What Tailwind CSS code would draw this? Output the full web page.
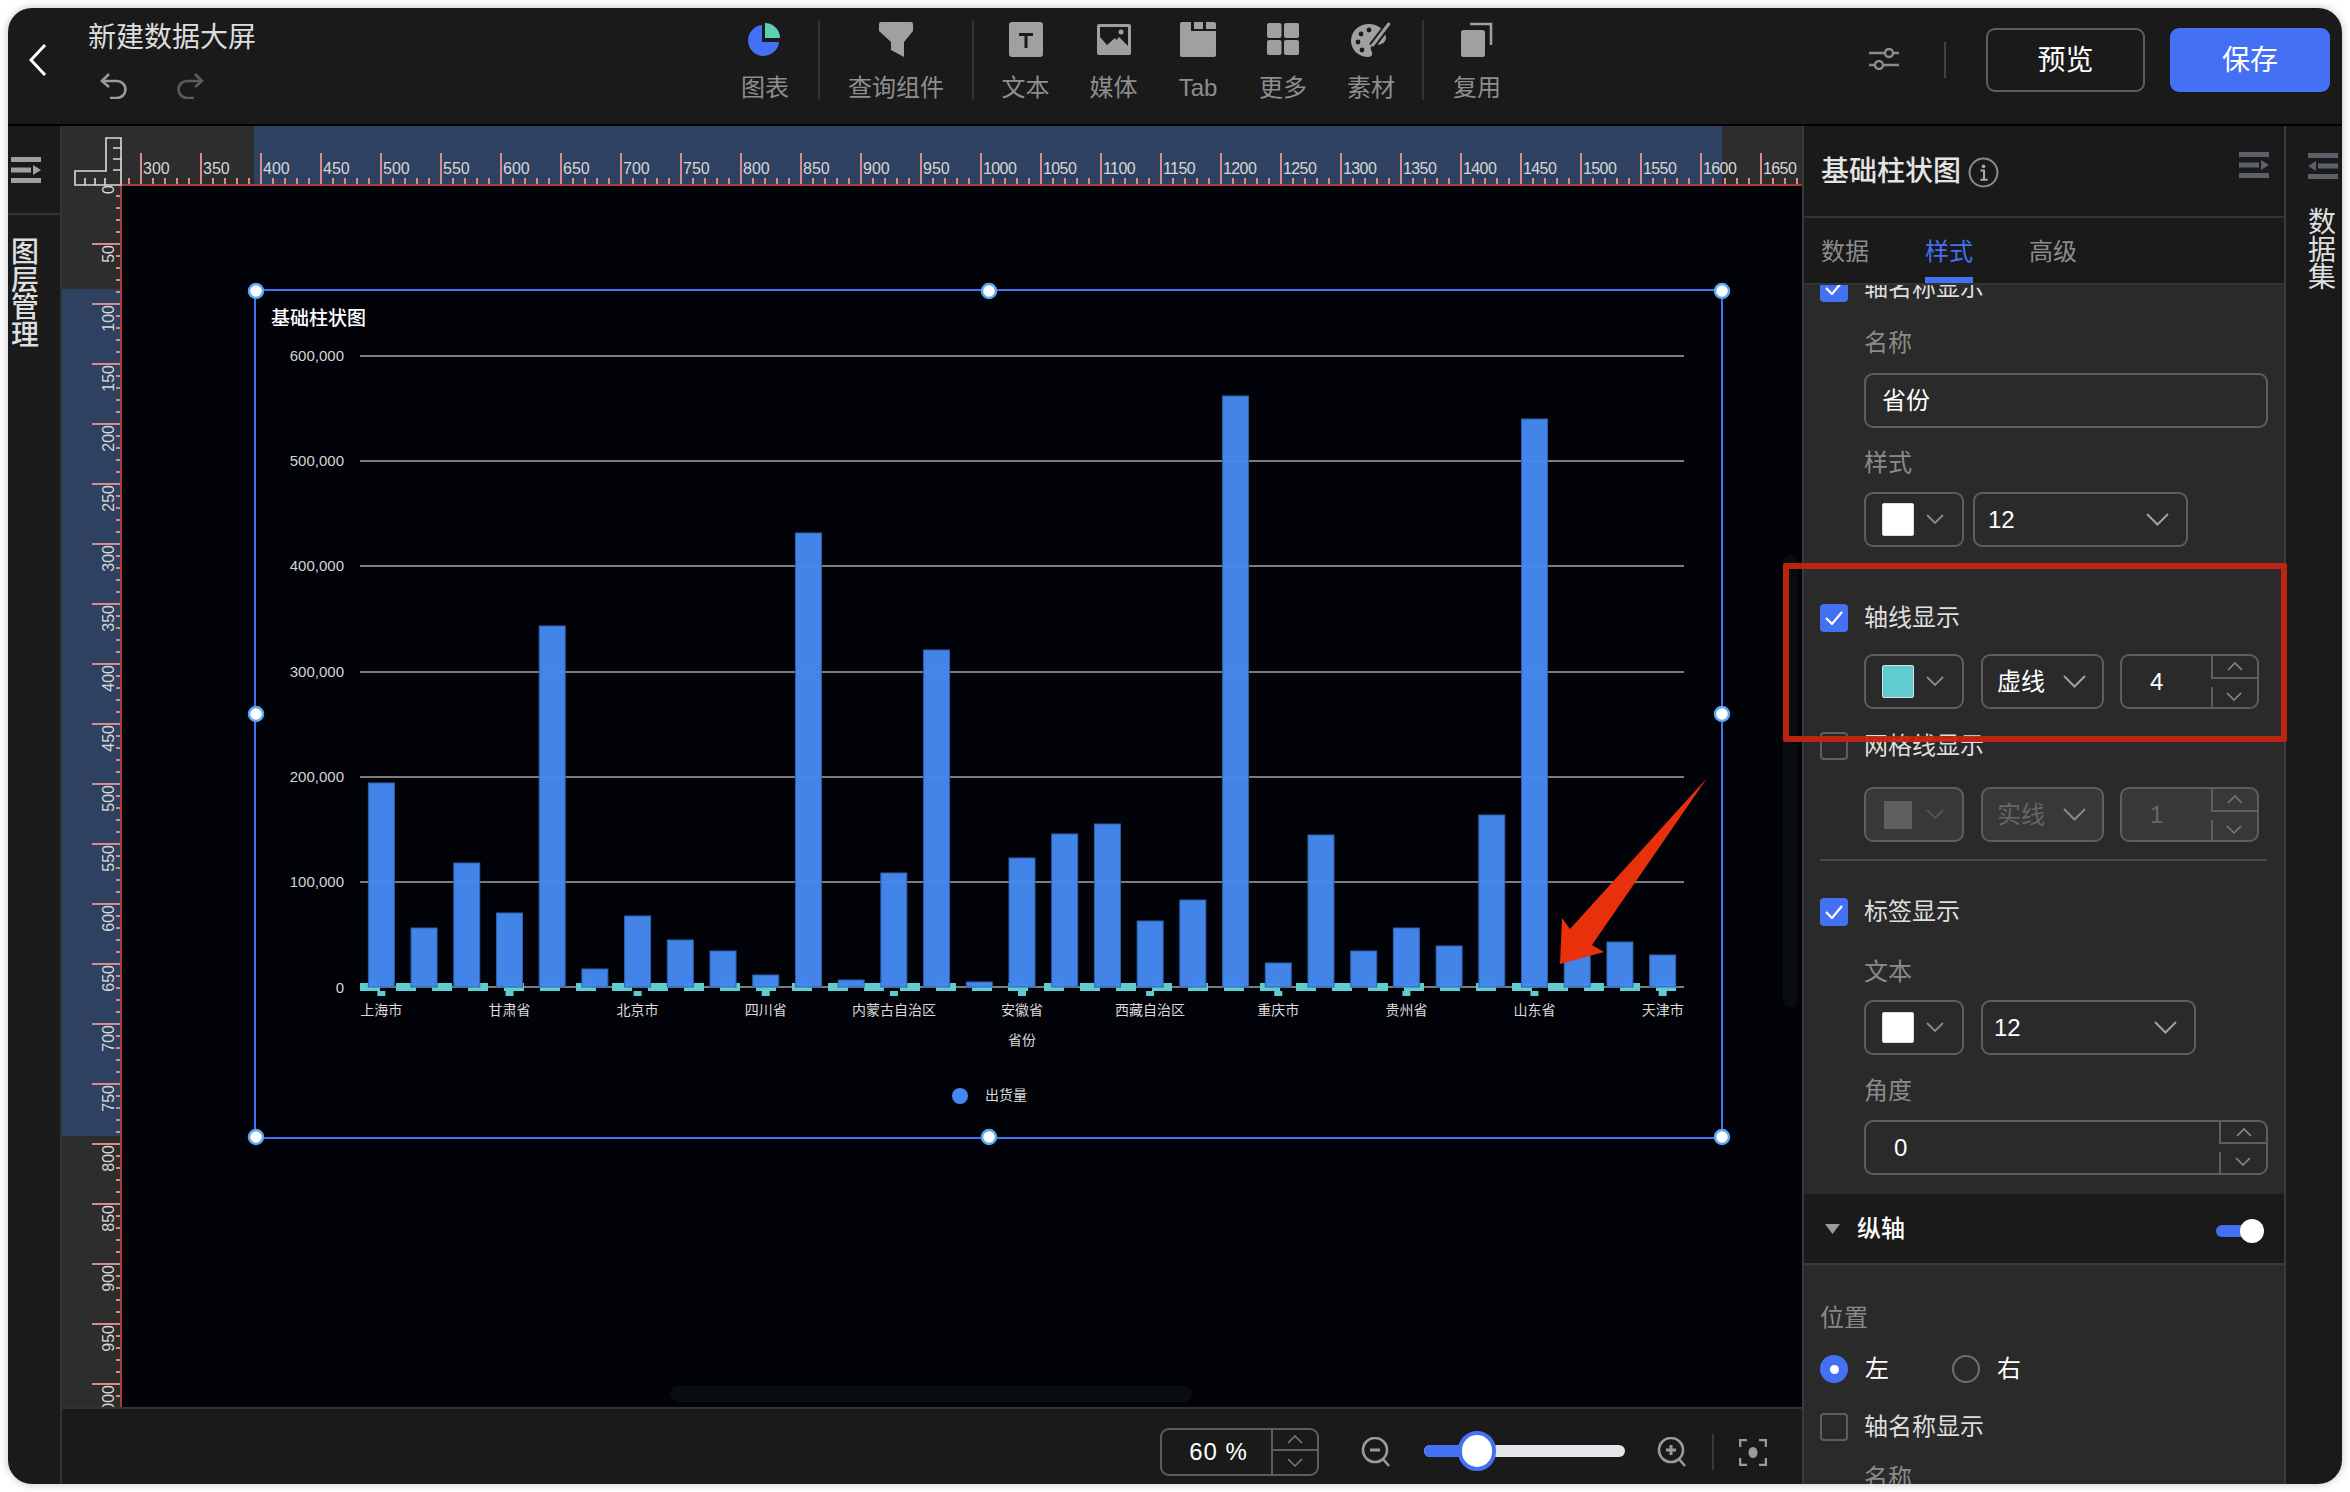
<!doctype html>
<html lang="zh"><head><meta charset="utf-8"><title>新建数据大屏</title>
<script src="https://cdn.jsdelivr.net/npm/@tailwindcss/browser@4"></script></head>
<body class="bg-white w-[2350px] h-[1492px] overflow-hidden p-[8px] font-['Liberation_Sans','Noto_Sans_CJK_SC',sans-serif] text-[24px] text-[#dedede]">
<div class="relative w-[2334px] h-[1476px] rounded-[24px] overflow-hidden bg-[#1a1a1a] flex flex-col shadow-[0_0_8px_rgba(0,0,0,0.25)]">

<!-- header -->
<header class="h-[118px] shrink-0 flex border-b-2 border-black">
  <div class="w-[704px] shrink-0 flex">
    <div class="w-[80px] pl-[21px] pt-[36px]">
      <svg width="18" height="32" viewBox="0 0 18 32" fill="none" stroke="#fff" stroke-width="3"><path d="M16 1 2 16l14 15"/></svg>
    </div>
    <div class="pt-[12px]">
      <div class="text-[28px] leading-[36px]">新建数据大屏</div>
      <div class="flex mt-[17px] ml-[12px] gap-[48px]">
        <svg width="28" height="26" viewBox="0 0 28 26" fill="none" stroke="#9a9a9a" stroke-width="2.6"><path d="M9 1 2 8l7 6"/><path d="M2 8h15a8 8 0 0 1 0 17h-7"/></svg>
        <svg width="28" height="26" viewBox="0 0 28 26" fill="none" stroke="#5c5c5c" stroke-width="2.6"><path d="M19 1l7 7-7 6"/><path d="M26 8H11a8 8 0 0 0 0 17h7"/></svg>
      </div>
    </div>
  </div>
  <nav class="flex text-[#8e8e8e]">
    <div class="w-[106px] flex flex-col items-center">
      <div class="h-[36px] mt-[14px]"><svg width="34" height="34" viewBox="0 0 34 34"><path fill="#4470f4" d="M14 3A15.5 15.5 0 1 0 31 20H14Z"/><path fill="#5ccfb5" d="M17 1a15 15 0 0 1 15 15H17Z"/></svg></div>
      <div class="mt-[13px] leading-[34px]">图表</div>
    </div>
    <div class="w-[2px] h-[80px] mt-[12px] bg-[#333]"></div>
    <div class="w-[152px] flex flex-col items-center">
      <div class="h-[36px] mt-[14px]"><svg width="34" height="36" viewBox="0 0 34 36"><path fill="#a0a0a0" d="M2 0H32a2 2 0 0 1 2 2V9L25 20V35L12 28V20L0 9V2a2 2 0 0 1 2-2Z"/></svg></div>
      <div class="mt-[13px] leading-[34px]">查询组件</div>
    </div>
    <div class="w-[2px] h-[80px] mt-[12px] bg-[#333]"></div>
    <div class="w-[103px] flex flex-col items-center">
      <div class="h-[36px] mt-[14px]"><svg width="34" height="35" viewBox="0 0 34 35"><rect width="34" height="35" rx="3" fill="#a0a0a0"/><path fill="#1a1a1a" d="M10 11h14v3h-5.5v12h-3V14H10Z"/></svg></div>
      <div class="mt-[13px] leading-[34px]">文本</div>
    </div>
    <div class="w-[73px] flex flex-col items-center">
      <div class="h-[36px] mt-[14px]"><svg width="34" height="34" viewBox="0 0 34 34"><rect y="2" width="34" height="31" rx="2" fill="#a0a0a0"/><rect x="3" y="5" width="28" height="20" fill="#1a1a1a"/><path fill="#a0a0a0" d="M3 15 10 23l8-7 7 10H3Z"/><path fill="#a0a0a0" d="M12 27 22 15l9 9v4Z"/><circle cx="24" cy="10" r="2.5" fill="#a0a0a0"/></svg></div>
      <div class="mt-[13px] leading-[34px]">媒体</div>
    </div>
    <div class="w-[96px] flex flex-col items-center">
      <div class="h-[36px] mt-[14px]"><svg width="36" height="35" viewBox="0 0 36 35"><path fill="#a0a0a0" d="M2 0h9v9h25v24a2 2 0 0 1-2 2H2a2 2 0 0 1-2-2V2a2 2 0 0 1 2-2Z"/><rect x="14" width="9" height="7" fill="#a0a0a0"/><path fill="#a0a0a0" d="M26 0h8a2 2 0 0 1 2 2v5H26Z"/></svg></div>
      <div class="mt-[13px] leading-[34px]">Tab</div>
    </div>
    <div class="w-[74px] flex flex-col items-center">
      <div class="h-[36px] mt-[14px]"><svg width="32" height="34" viewBox="0 0 32 34"><rect y="1" width="14.5" height="15" rx="2" fill="#a0a0a0"/><rect x="17" y="1" width="15" height="15" rx="2" fill="#a0a0a0"/><rect y="18" width="14.5" height="15" rx="2" fill="#a0a0a0"/><rect x="17" y="18" width="15" height="15" rx="2" fill="#a0a0a0"/></svg></div>
      <div class="mt-[13px] leading-[34px]">更多</div>
    </div>
    <div class="w-[102px] flex flex-col items-center">
      <div class="h-[36px] mt-[14px]"><svg width="40" height="36" viewBox="0 0 40 36"><path fill="#a0a0a0" d="M18 2C8 2 0 9 0 19c0 9 8 16 17 16 5 0 5-4 3-7-1-3 1-5 5-5 6 0 10-3 10-8C34 8 27 2 18 2Z"/><circle cx="10" cy="12" r="2.4" fill="#1a1a1a"/><circle cx="7" cy="20" r="2.4" fill="#1a1a1a"/><circle cx="18" cy="8" r="2.4" fill="#1a1a1a"/><circle cx="11" cy="28" r="2.4" fill="#1a1a1a"/><path d="M38 2 21 24" stroke="#1a1a1a" stroke-width="7"/><path d="M38.500 1 21 24" stroke="#a0a0a0" stroke-width="3"/></svg></div>
      <div class="mt-[13px] leading-[34px]">素材</div>
    </div>
    <div class="w-[2px] h-[80px] mt-[12px] bg-[#333]"></div>
    <div class="w-[106px] flex flex-col items-center">
      <div class="h-[36px] mt-[14px]"><svg width="32" height="35" viewBox="0 0 32 35"><rect y="8" width="24" height="27" rx="2.500" fill="#a0a0a0"/><path d="M9 2h21v21" fill="none" stroke="#a0a0a0" stroke-width="2.500"/></svg></div>
      <div class="mt-[13px] leading-[34px]">复用</div>
    </div>
  </nav>
  <div class="flex items-start pt-[20px] ml-[339px]">
    <svg class="mt-[20px]" width="30" height="22" viewBox="0 0 30 22" fill="none" stroke="#8c8c8c" stroke-width="2.400"><path d="M0 5h30M0 17h30"/><circle cx="20" cy="5" r="4" fill="#1a1a1a"/><circle cx="10" cy="17" r="4" fill="#1a1a1a"/></svg>
    <div class="w-[2px] h-[36px] bg-[#444] ml-[45px] mt-[14px]"></div>
    <div class="w-[159px] h-[64px] ml-[40px] pt-[2px] border-2 border-[#5e5e5e] rounded-[9px] flex items-center justify-center text-[28px] text-white">预览</div>
    <div class="w-[160px] h-[64px] ml-[25px] pt-[2px] bg-[#4470f4] rounded-[9px] flex items-center justify-center text-[28px] text-white">保存</div>
  </div>
</header>

<main class="flex flex-1 min-h-0">
  <!-- left rail -->
  <aside class="w-[54px] shrink-0 border-r-2 border-[#333] flex flex-col">
    <div class="h-[89px] border-b-2 border-[#333] pl-[3px] pt-[31px]">
      <svg class="block" width="30" height="26" viewBox="0 0 30 26" fill="#a0a0a0"><rect width="30" height="5"/><rect y="10.500" width="20" height="5"/><path d="M22 8l8 5-8 5Z"/><rect y="21" width="30" height="5"/></svg>
    </div>
    <div class="w-[28px] ml-[3px] mt-[24px] text-[28px] leading-[27.5px] font-medium">图层管理</div>
  </aside>

  <!-- centre -->
  <section class="w-[1740px] shrink-0 flex flex-col">
    <div class="flex h-[60px] shrink-0">
      <div class="w-[60px] bg-[#2d2d2d]">
        <svg class="block" width="60" height="60" viewBox="62 126 60 60" fill="none" stroke="#dcdcdc" stroke-width="1.600"><path d="M75 185V171h31v-33h15v47Z"/><path d="M85 185v-7M95 185v-7M105 185v-7M113 148h8M113 159h8M113 170h8"/></svg>
      </div>
      <svg class="block" width="1680" height="60" viewBox="122 126 1680 60">
        <defs><pattern id="tt" patternUnits="userSpaceOnUse" x="128" y="126" width="60" height="60"><path fill="#d98a8a" d="M0 52h2v8H0ZM12 27h2v33h-2ZM24 52h2v8h-2ZM36 52h2v8h-2ZM48 52h2v8h-2Z"/></pattern></defs>
        <rect x="122" y="126" width="1680" height="60" fill="#2d2d2d"/>
        <rect x="254" y="126" width="1468" height="60" fill="#2f4160"/>
        <rect x="122" y="126" width="1680" height="58" fill="url(#tt)"/>
        <rect x="122" y="184" width="1680" height="2" fill="#a83c3c"/>
        <g fill="#d6d6d6" class="text-[16px]">
          <text x="143" y="174">300</text><text x="203" y="174">350</text><text x="263" y="174">400</text><text x="323" y="174">450</text><text x="383" y="174">500</text><text x="443" y="174">550</text><text x="503" y="174">600</text><text x="563" y="174">650</text><text x="623" y="174">700</text><text x="683" y="174">750</text><text x="743" y="174">800</text><text x="803" y="174">850</text><text x="863" y="174">900</text><text x="923" y="174">950</text>
          <g class="tracking-[-0.6px]"><text x="983" y="174">1000</text><text x="1043" y="174">1050</text><text x="1103" y="174">1100</text><text x="1163" y="174">1150</text><text x="1223" y="174">1200</text><text x="1283" y="174">1250</text><text x="1343" y="174">1300</text><text x="1403" y="174">1350</text><text x="1463" y="174">1400</text><text x="1523" y="174">1450</text><text x="1583" y="174">1500</text><text x="1643" y="174">1550</text><text x="1703" y="174">1600</text><text x="1763" y="174">1650</text></g>
        </g>
      </svg>
    </div>
    <div class="flex h-[1221px] shrink-0">
      <svg class="block shrink-0" width="60" height="1221" viewBox="62 186 60 1221">
        <defs><pattern id="lt" patternUnits="userSpaceOnUse" x="62" y="195" width="60" height="60"><path fill="#d98a8a" d="M54 0h4v2h-4ZM54 12h4v2h-4ZM54 24h4v2h-4ZM54 36h4v2h-4ZM30 48h28v2H30Z"/></pattern></defs>
        <rect x="62" y="186" width="60" height="1221" fill="#2d2d2d"/>
        <rect x="62" y="289" width="60" height="847" fill="#2f4160"/>
        <rect x="62" y="186" width="58" height="1221" fill="url(#lt)"/>
        <rect x="120" y="186" width="2" height="1221" fill="#a83c3c"/>
        <g fill="#d6d6d6" class="text-[16px]" text-anchor="end">
          <text transform="translate(114 185) rotate(-90)">0</text><text transform="translate(114 245) rotate(-90)">50</text><text transform="translate(114 305) rotate(-90)">100</text><text transform="translate(114 365) rotate(-90)">150</text><text transform="translate(114 425) rotate(-90)">200</text><text transform="translate(114 485) rotate(-90)">250</text><text transform="translate(114 545) rotate(-90)">300</text><text transform="translate(114 605) rotate(-90)">350</text><text transform="translate(114 665) rotate(-90)">400</text><text transform="translate(114 725) rotate(-90)">450</text><text transform="translate(114 785) rotate(-90)">500</text><text transform="translate(114 845) rotate(-90)">550</text><text transform="translate(114 905) rotate(-90)">600</text><text transform="translate(114 965) rotate(-90)">650</text><text transform="translate(114 1025) rotate(-90)">700</text><text transform="translate(114 1085) rotate(-90)">750</text><text transform="translate(114 1145) rotate(-90)">800</text><text transform="translate(114 1205) rotate(-90)">850</text><text transform="translate(114 1265) rotate(-90)">900</text><text transform="translate(114 1325) rotate(-90)">950</text><text transform="translate(114 1385) rotate(-90)">1000</text>
        </g>
      </svg>
      <div class="relative w-[1680px] bg-[#020308] overflow-hidden">
        <svg class="absolute left-0 top-0" width="1680" height="1221" viewBox="122 186 1680 1221">
          <text x="271" y="325" fill="#fff" font-weight="500" class="text-[19px]">基础柱状图</text>
          <g fill="#d4d4d4" class="text-[15px]" text-anchor="end">
            <text x="344" y="361">600,000</text><text x="344" y="466">500,000</text><text x="344" y="571">400,000</text><text x="344" y="677">300,000</text><text x="344" y="782">200,000</text><text x="344" y="887">100,000</text><text x="344" y="993">0</text>
          </g>
          <g fill="#7c7c7c"><rect x="360" y="355" width="1324" height="2"/><rect x="360" y="460" width="1324" height="2"/><rect x="360" y="565" width="1324" height="2"/><rect x="360" y="671" width="1324" height="2"/><rect x="360" y="776" width="1324" height="2"/><rect x="360" y="881" width="1324" height="2"/><rect x="360" y="986" width="1324" height="2"/></g>
          <path d="M360 987H1684" stroke="#5fcdd0" stroke-width="8" stroke-dasharray="20 16"/>
          <g fill="#5fcdd0"><rect x="377.350" y="991" width="8" height="5"/><rect x="505.500" y="991" width="8" height="5"/><rect x="633.600" y="991" width="8" height="5"/><rect x="761.700" y="991" width="8" height="5"/><rect x="889.900" y="991" width="8" height="5"/><rect x="1018" y="991" width="8" height="5"/><rect x="1146.100" y="991" width="8" height="5"/><rect x="1274.300" y="991" width="8" height="5"/><rect x="1402.400" y="991" width="8" height="5"/><rect x="1530.500" y="991" width="8" height="5"/><rect x="1658.700" y="991" width="8" height="5"/></g>
          <g fill="#4488f0" fill-opacity="0.97" stroke="#2f62ad" stroke-width="1">
            <rect x="368.350" y="783" width="26" height="204"/><rect x="411.060" y="928" width="26" height="59"/><rect x="453.770" y="863" width="26" height="124"/><rect x="496.480" y="913" width="26" height="74"/><rect x="539.190" y="626" width="26" height="361"/><rect x="581.900" y="969" width="26" height="18"/><rect x="624.610" y="916" width="26" height="71"/><rect x="667.320" y="940" width="26" height="47"/><rect x="710.030" y="951" width="26" height="36"/><rect x="752.740" y="975" width="26" height="12"/><rect x="795.450" y="533" width="26" height="454"/><rect x="838.160" y="980" width="26" height="7"/><rect x="880.870" y="873" width="26" height="114"/><rect x="923.580" y="650" width="26" height="337"/><rect x="966.290" y="982" width="26" height="5"/><rect x="1009" y="858" width="26" height="129"/><rect x="1051.710" y="834" width="26" height="153"/><rect x="1094.420" y="824" width="26" height="163"/><rect x="1137.130" y="921" width="26" height="66"/><rect x="1179.840" y="900" width="26" height="87"/><rect x="1222.550" y="396" width="26" height="591"/><rect x="1265.260" y="963" width="26" height="24"/><rect x="1307.970" y="835" width="26" height="152"/><rect x="1350.680" y="951" width="26" height="36"/><rect x="1393.390" y="928" width="26" height="59"/><rect x="1436.100" y="946" width="26" height="41"/><rect x="1478.810" y="815" width="26" height="172"/><rect x="1521.520" y="419" width="26" height="568"/><rect x="1564.230" y="955" width="26" height="32"/><rect x="1606.940" y="942" width="26" height="45"/><rect x="1649.650" y="955" width="26" height="32"/>
          </g>
          <g fill="#dadada" class="text-[14px]" text-anchor="middle">
            <text x="381.350" y="1015">上海市</text><text x="509.500" y="1015">甘肃省</text><text x="637.600" y="1015">北京市</text><text x="765.700" y="1015">四川省</text><text x="893.900" y="1015">内蒙古自治区</text><text x="1022" y="1015">安徽省</text><text x="1150.100" y="1015">西藏自治区</text><text x="1278.300" y="1015">重庆市</text><text x="1406.400" y="1015">贵州省</text><text x="1534.500" y="1015">山东省</text><text x="1662.700" y="1015">天津市</text>
            <text x="1022" y="1045">省份</text>
            <text x="1006" y="1100">出货量</text>
          </g>
          <circle cx="960" cy="1096" r="8" fill="#4488f0"/>
          <rect x="255" y="290" width="1467" height="848" fill="none" stroke="#4470f4" stroke-width="2"/>
          <g fill="#fff" stroke="#5aa9f0" stroke-width="2.500">
            <circle cx="256" cy="291" r="7"/><circle cx="989" cy="291" r="7"/><circle cx="1722" cy="291" r="7"/><circle cx="256" cy="714" r="7"/><circle cx="1722" cy="714" r="7"/><circle cx="256" cy="1137" r="7"/><circle cx="989" cy="1137" r="7"/><circle cx="1722" cy="1137" r="7"/>
          </g>
          <polygon points="1707,778 1592,945 1604,952 1560,964 1562,918 1570,929" fill="#e8300c"/>
        </svg>
        <div class="absolute left-[548px] top-[1200px] w-[522px] h-[16px] rounded-full bg-[#0a0d12]"></div>
        <div class="absolute left-[1661px] top-[369px] w-[15px] h-[452px] rounded-full bg-[#080c10]"></div>
      </div>
    </div>
    <div class="h-[77px] shrink-0 border-t-2 border-[#333] flex items-start pt-[19px] pl-[1098px]">
      <div class="w-[159px] h-[48px] border-2 border-[#5e5e5e] rounded-[9px] flex">
        <div class="w-[109px] pl-[4px] flex items-center justify-center text-white tracking-[0.9px]">60 %</div>
        <div class="flex-1 border-l-2 border-[#5e5e5e] flex flex-col">
          <div class="h-[21px] border-b-2 border-[#5e5e5e] flex items-center justify-center"><svg width="16" height="9" viewBox="0 0 16 9" fill="none" stroke="#7a7a7a" stroke-width="1.500"><path d="M1 8l7-7 7 7"/></svg></div>
          <div class="flex-1 flex items-center justify-center"><svg width="16" height="9" viewBox="0 0 16 9" fill="none" stroke="#7a7a7a" stroke-width="1.500"><path d="M1 1l7 7 7-7"/></svg></div>
        </div>
      </div>
      <svg class="ml-[42px] mt-[9px]" width="31" height="31" viewBox="0 0 31 31" fill="none" stroke="#9a9a9a" stroke-width="2.600"><circle cx="14" cy="13" r="12"/><path d="M22 22l6 7"/><path d="M9 13h10" stroke-width="3"/></svg>
      <div class="relative w-[201px] h-[12px] ml-[32px] mt-[17px] rounded-full bg-[#e5e6ea]">
        <div class="w-[52px] h-[12px] rounded-l-full bg-[#4470f4]"></div>
        <div class="absolute left-[34px] top-[-14px] w-[38px] h-[40px] rounded-full bg-white border-[4px] border-[#4470f4]"></div>
      </div>
      <svg class="ml-[32px] mt-[9px]" width="31" height="31" viewBox="0 0 31 31" fill="none" stroke="#9a9a9a" stroke-width="2.600"><circle cx="14" cy="13" r="12"/><path d="M22 22l6 7"/><path d="M9 13h10M14 8v10" stroke-width="3"/></svg>
      <div class="w-[2px] h-[36px] bg-[#3a3a3a] ml-[24px] mt-[6px]"></div>
      <svg class="ml-[25px] mt-[11px]" width="28" height="27" viewBox="0 0 28 27" fill="none" stroke="#9a9a9a" stroke-width="2.600"><path d="M8 1H1v7M20 1h7v7M1 19v7h7M27 19v7h-7"/><ellipse cx="14" cy="13.500" rx="4.500" ry="5.500" fill="#9a9a9a" stroke="none"/></svg>
    </div>
  </section>

  <!-- right panel -->
  <aside class="w-[484px] shrink-0 border-x-2 border-[#3a3a3a] bg-[#2a2a2a] flex flex-col overflow-hidden">
    <div class="h-[92px] shrink-0 bg-[#1a1a1a] border-b-2 border-[#333] flex items-center pl-[17px] relative">
      <span class="text-[28px] pt-[2px] font-medium text-[#e4e4e4]">基础柱状图</span>
      <svg class="ml-[7px] mt-[2px]" width="31" height="31" viewBox="0 0 30 30" fill="none" stroke="#8a8a8a" stroke-width="2"><circle cx="15" cy="15" r="13.500"/><circle cx="15" cy="9" r="1.800" fill="#a8a8a8" stroke="none"/><path d="M12 13h3.500v9M12 22h7" stroke="#a8a8a8"/></svg>
      <svg class="ml-auto mr-[15px] mb-[12px]" width="30" height="26" viewBox="0 0 30 26" fill="#5c6068"><rect width="30" height="5"/><rect y="10.500" width="20" height="5"/><path d="M22 8l8 5-8 5Z"/><rect y="21" width="30" height="5"/></svg>
    </div>
    <div class="h-[67px] shrink-0 bg-[#1a1a1a] border-b-2 border-[#333] flex pl-[17px] gap-[56px] text-[#8c8c8c] leading-[68px] relative">
      <span>数据</span>
      <span class="text-[#4470f4] relative">样式<i class="absolute left-0 top-[59px] w-[48px] h-[6px] bg-[#4470f4]"></i></span>
      <span>高级</span>
    </div>
    <div class="flex-1 min-h-0 overflow-hidden">
      <div class="pl-[16px] -mt-[11px]">
        <div class="flex items-center h-[28px] gap-[16px]">
          <span class="w-[28px] h-[28px] rounded-[4px] bg-[#4470f4] flex items-center justify-center"><svg width="18" height="14" viewBox="0 0 18 14" fill="none" stroke="#fff" stroke-width="2.200"><path d="M1 7l6 6L17 1"/></svg></span>
          <span>轴名称显示</span>
        </div>
        <div class="ml-[44px] mt-[24px] leading-[34px] text-[#8a8a8a]">名称</div>
        <div class="ml-[44px] mt-[13px] w-[404px] h-[55px] border-2 border-[#5e5e5e] rounded-[9px] pl-[16px] flex items-center text-white">省份</div>
        <div class="ml-[44px] mt-[18px] leading-[34px] text-[#8a8a8a]">样式</div>
        <div class="ml-[44px] mt-[12px] flex gap-[9px]">
          <div class="w-[100px] h-[55px] border-2 border-[#5e5e5e] rounded-[9px] flex items-center pl-[16px]"><span class="w-[32px] h-[33px] bg-white rounded-[2px] border border-[#ddd]"></span><svg class="ml-[12px]" width="18" height="11" viewBox="0 0 18 11" fill="none" stroke="#8a8a8a" stroke-width="1.800"><path d="M1 1l8 8 8-8"/></svg></div>
          <div class="w-[215px] h-[55px] border-2 border-[#5e5e5e] rounded-[9px] flex items-center justify-between pl-[13px] pr-[17px] text-white">12<svg width="23" height="13" viewBox="0 0 23 13" fill="none" stroke="#a0a0a0" stroke-width="2"><path d="M1 1l10.500 10.500L22 1"/></svg></div>
        </div>
        <div class="flex items-center h-[28px] gap-[16px] mt-[57px]">
          <span class="w-[28px] h-[28px] rounded-[4px] bg-[#4470f4] flex items-center justify-center"><svg width="18" height="14" viewBox="0 0 18 14" fill="none" stroke="#fff" stroke-width="2.200"><path d="M1 7l6 6L17 1"/></svg></span>
          <span>轴线显示</span>
        </div>
        <div class="ml-[44px] mt-[22px] flex">
          <div class="w-[100px] h-[55px] border-2 border-[#5e5e5e] rounded-[9px] flex items-center pl-[16px]"><span class="w-[32px] h-[33px] bg-[#5fcdd0] rounded-[2px] border border-[#ddd]"></span><svg class="ml-[12px]" width="18" height="11" viewBox="0 0 18 11" fill="none" stroke="#8a8a8a" stroke-width="1.800"><path d="M1 1l8 8 8-8"/></svg></div>
          <div class="w-[123px] h-[55px] ml-[17px] border-2 border-[#5e5e5e] rounded-[9px] flex items-center justify-between pl-[14px] pr-[16px] text-white">虚线<svg width="23" height="13" viewBox="0 0 23 13" fill="none" stroke="#a0a0a0" stroke-width="2"><path d="M1 1l10.500 10.500L22 1"/></svg></div>
          <div class="w-[139px] h-[55px] ml-[16px] border-2 border-[#5e5e5e] rounded-[9px] flex text-white">
            <div class="w-[89px] pl-[28px] flex items-center">4</div>
            <div class="flex-1 flex flex-col">
              <div class="h-[23px] border-l-2 border-b-2 border-[#5e5e5e] flex items-center justify-center"><svg width="16" height="9" viewBox="0 0 16 9" fill="none" stroke="#8a8a8a" stroke-width="1.600"><path d="M1 8l7-7 7 7"/></svg></div>
              <div class="flex-1 relative flex items-center justify-center pt-[6px]"><i class="absolute left-0 top-[8px] bottom-0 w-[2px] bg-[#5e5e5e]"></i><svg width="16" height="9" viewBox="0 0 16 9" fill="none" stroke="#8a8a8a" stroke-width="1.600"><path d="M1 1l7 7 7-7"/></svg></div>
            </div>
          </div>
        </div>
        <div class="flex items-center h-[28px] gap-[16px] mt-[23px]">
          <span class="w-[28px] h-[28px] rounded-[4px] border-2 border-[#5e5e5e]"></span>
          <span>网格线显示</span>
        </div>
        <div class="ml-[44px] mt-[27px] flex">
          <div class="w-[100px] h-[55px] bg-[#383838] border-2 border-[#5e5e5e] rounded-[9px] flex items-center pl-[18px]"><span class="w-[28px] h-[28px] bg-[#5e5e5e]"></span><svg class="ml-[14px]" width="18" height="11" viewBox="0 0 18 11" fill="none" stroke="#555" stroke-width="1.800"><path d="M1 1l8 8 8-8"/></svg></div>
          <div class="w-[123px] h-[55px] ml-[17px] bg-[#383838] border-2 border-[#5e5e5e] rounded-[9px] flex items-center justify-between pl-[14px] pr-[16px] text-[#666]">实线<svg width="23" height="13" viewBox="0 0 23 13" fill="none" stroke="#8a8a8a" stroke-width="2"><path d="M1 1l10.500 10.500L22 1"/></svg></div>
          <div class="w-[139px] h-[55px] ml-[16px] bg-[#383838] border-2 border-[#5e5e5e] rounded-[9px] flex text-[#666]">
            <div class="w-[89px] pl-[28px] flex items-center">1</div>
            <div class="flex-1 flex flex-col">
              <div class="h-[23px] border-l-2 border-b-2 border-[#5e5e5e] flex items-center justify-center"><svg width="16" height="9" viewBox="0 0 16 9" fill="none" stroke="#777" stroke-width="1.600"><path d="M1 8l7-7 7 7"/></svg></div>
              <div class="flex-1 relative flex items-center justify-center pt-[6px]"><i class="absolute left-0 top-[8px] bottom-0 w-[2px] bg-[#5e5e5e]"></i><svg width="16" height="9" viewBox="0 0 16 9" fill="none" stroke="#777" stroke-width="1.600"><path d="M1 1l7 7 7-7"/></svg></div>
            </div>
          </div>
        </div>
        <div class="mt-[17px] w-[447px] h-[2px] bg-[#4a4a4a]"></div>
        <div class="flex items-center h-[28px] gap-[16px] mt-[37px]">
          <span class="w-[28px] h-[28px] rounded-[4px] bg-[#4470f4] flex items-center justify-center"><svg width="18" height="14" viewBox="0 0 18 14" fill="none" stroke="#fff" stroke-width="2.200"><path d="M1 7l6 6L17 1"/></svg></span>
          <span>标签显示</span>
        </div>
        <div class="ml-[44px] mt-[29px] leading-[34px] text-[#8a8a8a]">文本</div>
        <div class="ml-[44px] mt-[11px] flex">
          <div class="w-[100px] h-[55px] border-2 border-[#5e5e5e] rounded-[9px] flex items-center pl-[16px]"><span class="w-[32px] h-[31px] bg-white rounded-[2px] border border-[#ddd]"></span><svg class="ml-[12px]" width="18" height="11" viewBox="0 0 18 11" fill="none" stroke="#8a8a8a" stroke-width="1.800"><path d="M1 1l8 8 8-8"/></svg></div>
          <div class="w-[215px] h-[55px] ml-[17px] border-2 border-[#5e5e5e] rounded-[9px] flex items-center justify-between pl-[11px] pr-[17px] text-white">12<svg width="23" height="13" viewBox="0 0 23 13" fill="none" stroke="#a0a0a0" stroke-width="2"><path d="M1 1l10.500 10.500L22 1"/></svg></div>
        </div>
        <div class="ml-[44px] mt-[19px] leading-[34px] text-[#8a8a8a]">角度</div>
        <div class="ml-[44px] mt-[12px] w-[404px] h-[55px] border-2 border-[#5e5e5e] rounded-[9px] flex text-white">
          <div class="w-[353px] pl-[28px] flex items-center">0</div>
          <div class="flex-1 flex flex-col">
            <div class="h-[22px] border-l-2 border-b-2 border-[#5e5e5e] flex items-center justify-center"><svg width="16" height="9" viewBox="0 0 16 9" fill="none" stroke="#8a8a8a" stroke-width="1.600"><path d="M1 8l7-7 7 7"/></svg></div>
            <div class="flex-1 relative flex items-center justify-center pt-[6px]"><i class="absolute left-0 top-[8px] bottom-0 w-[2px] bg-[#5e5e5e]"></i><svg width="16" height="9" viewBox="0 0 16 9" fill="none" stroke="#8a8a8a" stroke-width="1.600"><path d="M1 1l7 7 7-7"/></svg></div>
          </div>
        </div>
      </div>
      <div class="mt-[19px] h-[71px] bg-[#1a1a1a] border-b-2 border-[#3a3a3a] flex items-center pl-[21px] relative">
        <svg width="15" height="10" viewBox="0 0 15 10" fill="#9a9a9a"><path d="M0 0h15L7.500 10Z"/></svg>
        <span class="ml-[17px] text-white font-medium">纵轴</span>
        <div class="absolute left-[412px] top-[31px] w-[40px] h-[12px] rounded-full bg-[#4470f4]"></div>
        <div class="absolute left-[436px] top-[25px] w-[24px] h-[24px] rounded-full bg-white"></div>
      </div>
      <div class="pl-[16px]">
        <div class="mt-[36px] leading-[34px] text-[#8a8a8a]">位置</div>
        <div class="mt-[20px] flex items-center h-[28px]">
          <span class="w-[28px] h-[28px] rounded-full bg-[#4470f4] flex items-center justify-center"><i class="w-[9px] h-[9px] rounded-full bg-white"></i></span>
          <span class="ml-[17px] w-[87px] text-white">左</span>
          <span class="w-[28px] h-[28px] rounded-full border-2 border-[#6e6e6e]"></span>
          <span class="ml-[17px] text-white">右</span>
        </div>
        <div class="flex items-center h-[28px] gap-[16px] mt-[30px]">
          <span class="w-[28px] h-[28px] rounded-[4px] border-2 border-[#5e5e5e]"></span>
          <span>轴名称显示</span>
        </div>
        <div class="ml-[44px] mt-[20px] leading-[34px] text-[#8a8a8a]">名称</div>
      </div>
    </div>
  </aside>

  <!-- right rail -->
  <aside class="flex-1 flex flex-col pl-[22px]">
    <svg class="block mt-[27px]" width="30" height="26" viewBox="0 0 30 26" fill="#5c6068"><rect width="30" height="5"/><rect x="10" y="10.500" width="20" height="5"/><path d="M8 8l-8 5 8 5Z"/><rect y="21" width="30" height="5"/></svg>
    <div class="w-[28px] mt-[30px] text-[28px] leading-[27.5px]">数据集</div>
  </aside>
</main>

<!-- annotation -->
<div class="absolute left-[1775px] top-[555px] w-[504px] h-[179px] border-[6px] border-[#c4260f]/95 rounded-[2px]"></div>
</div>
</body></html>
